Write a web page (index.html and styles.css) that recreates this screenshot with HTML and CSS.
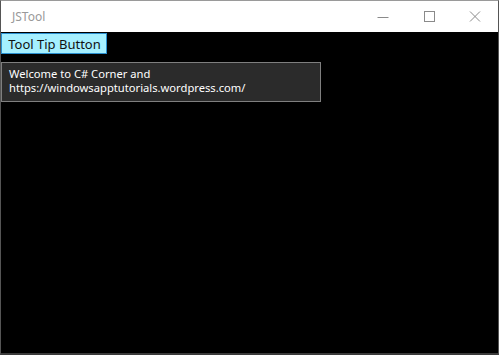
FILE: index.html
```html
<!DOCTYPE html>
<html>
<head>
<meta charset="utf-8">
<link rel="stylesheet" href="styles.css">
</head>
<body>
<div class="window">
  <div class="titlebar">
    <span class="title">JSTool</span>
    <div class="controls">
      <span class="ctl"><svg width="12" height="12" viewBox="0 0 12 12"><path d="M0.5 6.5H11.5" stroke="#8a8a8a" stroke-width="1"/></svg></span>
      <span class="ctl"><svg width="12" height="12" viewBox="0 0 12 12"><rect x="1.5" y="0.5" width="10" height="10" fill="none" stroke="#8a8a8a" stroke-width="1"/></svg></span>
      <span class="ctl"><svg width="12" height="12" viewBox="0 0 12 12"><path d="M1 0.5L11 10.5M11 0.5L1 10.5" stroke="#8a8a8a" stroke-width="1"/></svg></span>
    </div>
  </div>
  <div class="content">
    <button class="btn">Tool Tip Button</button>
    <div class="tooltip">Welcome to C# Corner and<br>https://windowsapptutorials.wordpress.com/</div>
  </div>
</div>
</body>
</html>
```
FILE: styles.css
```css
html, body { margin: 0; padding: 0; background: #000; }
body { width: 499px; height: 355px; overflow: hidden; font-family: "Noto Sans", sans-serif; }
.window {
  box-sizing: border-box;
  width: 499px; height: 355px;
  border: 1px solid #9a9a9a;
  border-bottom: 2px solid #3a3a3a;
  border-left-color: #555;
  border-right-color: #555;
  display: flex; flex-direction: column;
  background: #000;
}
.titlebar {
  height: 31px; background: #fff;
  display: flex; align-items: center; justify-content: space-between;
  flex-shrink: 0;
}
.title { margin-left: 11px; font-size: 12px; color: #999; font-family: "Noto Sans", sans-serif; }
.controls { display: flex; }
.ctl { width: 46px; height: 31px; display: flex; align-items: center; justify-content: center; }
.content { flex: 1; position: relative; }
.btn {
  display: block;
  margin: 1px 0 0 0;
  box-sizing: border-box;
  height: 21px;
  width: 106px;
  padding: 0 0 0 1px;
  text-align: center;
  background: #a5f0ff;
  border: 1px solid #2a90d0;
  color: #111;
  font-family: "Noto Sans", sans-serif;
  font-size: 13px;
  line-height: 18px;
}
.tooltip {
  position: absolute;
  left: 0; top: 30px;
  box-sizing: border-box;
  width: 320px; height: 40px;
  background: #2b2b2b;
  border: 1px solid #7f7f7f;
  color: #fff;
  font-family: "Noto Sans", sans-serif;
  font-size: 11.2px;
  line-height: 14px;
  padding: 4px 7px;
}
```
